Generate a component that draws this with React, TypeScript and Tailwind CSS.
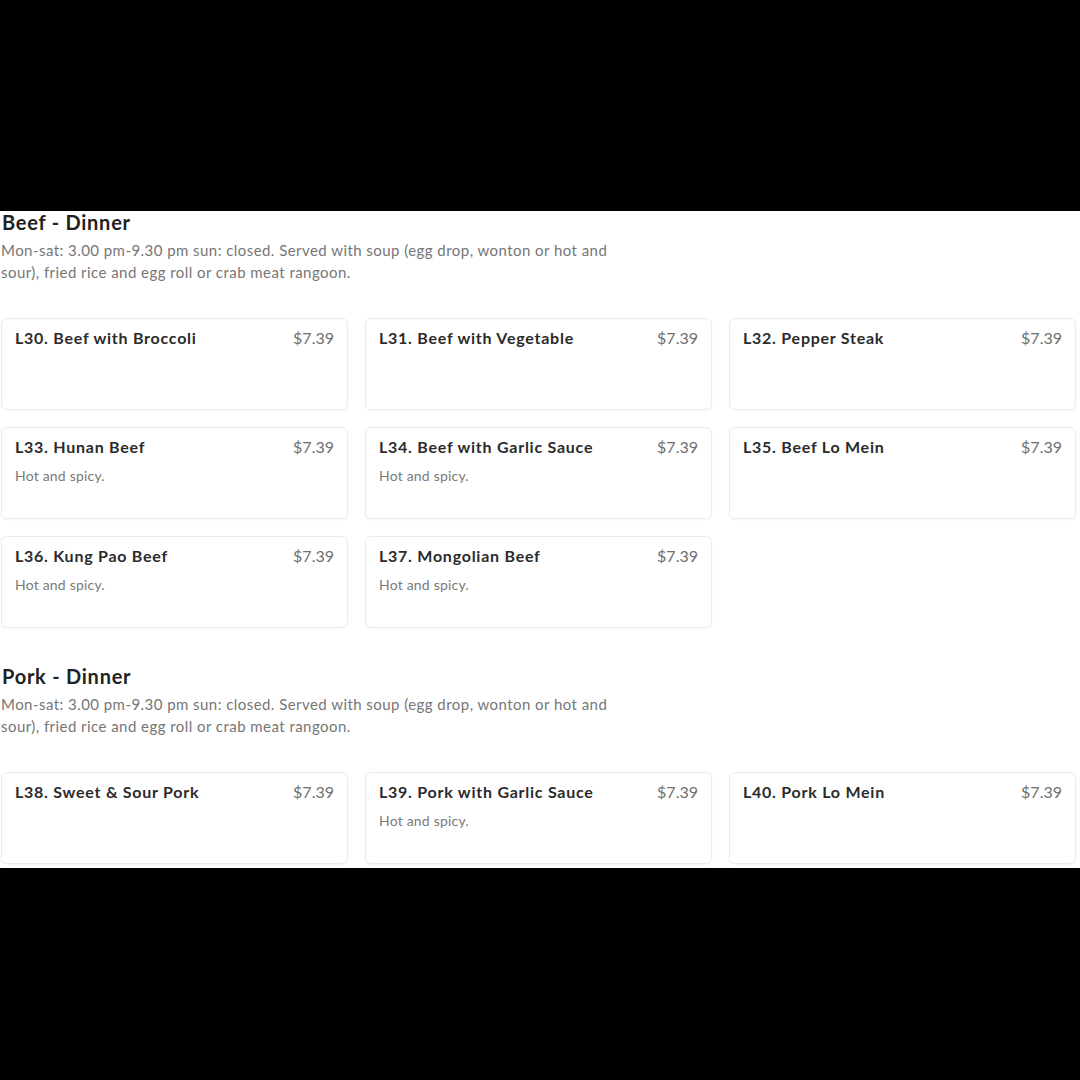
import React from 'react';

type Item = { name: string; price: string; note?: string };

const beef: Item[] = [
  { name: 'L30. Beef with Broccoli', price: '$7.39' },
  { name: 'L31. Beef with Vegetable', price: '$7.39' },
  { name: 'L32. Pepper Steak', price: '$7.39' },
  { name: 'L33. Hunan Beef', price: '$7.39', note: 'Hot and spicy.' },
  { name: 'L34. Beef with Garlic Sauce', price: '$7.39', note: 'Hot and spicy.' },
  { name: 'L35. Beef Lo Mein', price: '$7.39' },
  { name: 'L36. Kung Pao Beef', price: '$7.39', note: 'Hot and spicy.' },
  { name: 'L37. Mongolian Beef', price: '$7.39', note: 'Hot and spicy.' },
];

const pork: Item[] = [
  { name: 'L38. Sweet & Sour Pork', price: '$7.39' },
  { name: 'L39. Pork with Garlic Sauce', price: '$7.39', note: 'Hot and spicy.' },
  { name: 'L40. Pork Lo Mein', price: '$7.39' },
];

function MenuCard({ item }: { item: Item }) {
  return (
    <div className="h-[92px] rounded-[6px] border border-[#ececec] bg-white px-[13px] pt-[8px] shadow-[0_1px_2px_rgba(0,0,0,0.04)]">
      <div className="flex items-start justify-between gap-3">
        <span className="text-[16px] leading-[22px] font-bold text-[#2b2b2b] tracking-[0.75px]">{item.name}</span>
        <span className="text-[16px] leading-[22px] text-[#6f6f6f]">{item.price}</span>
      </div>
      {item.note && (
        <p className="mt-[8px] text-[14px] leading-[20px] text-[#7a7a7a] tracking-[0.2px]">{item.note}</p>
      )}
    </div>
  );
}

function Section({ title, items }: { title: string; items: Item[] }) {
  return (
    <div className="flex flex-col">
      <h2 className="pl-[1px] text-[20px] leading-[22px] font-bold text-[#222] tracking-[0.75px]">{title}</h2>
      <p className="mt-[6px] text-[15px] leading-[22px] text-[#767676] tracking-[0.45px]">
        <span className="block whitespace-nowrap">Mon-sat: 3.00 pm-9.30 pm sun: closed. Served with soup (egg drop, wonton or hot and</span>
        <span className="block whitespace-nowrap">sour), fried rice and egg roll or crab meat rangoon.</span>
      </p>
      <div className="mt-[35px] grid grid-cols-3 gap-[17px]">
        {items.map((it) => (
          <MenuCard key={it.name} item={it} />
        ))}
      </div>
    </div>
  );
}

export default function App() {
  return (
    <div className="flex min-h-[1080px] w-[1080px] flex-col bg-black font-['Lato',sans-serif]">
      <div className="h-[211px]" />
      <div className="flex h-[657px] flex-col gap-[37px] bg-white pl-[1px] pr-[4px]">
        <Section title="Beef - Dinner" items={beef} />
        <Section title="Pork - Dinner" items={pork} />
      </div>
    </div>
  );
}
